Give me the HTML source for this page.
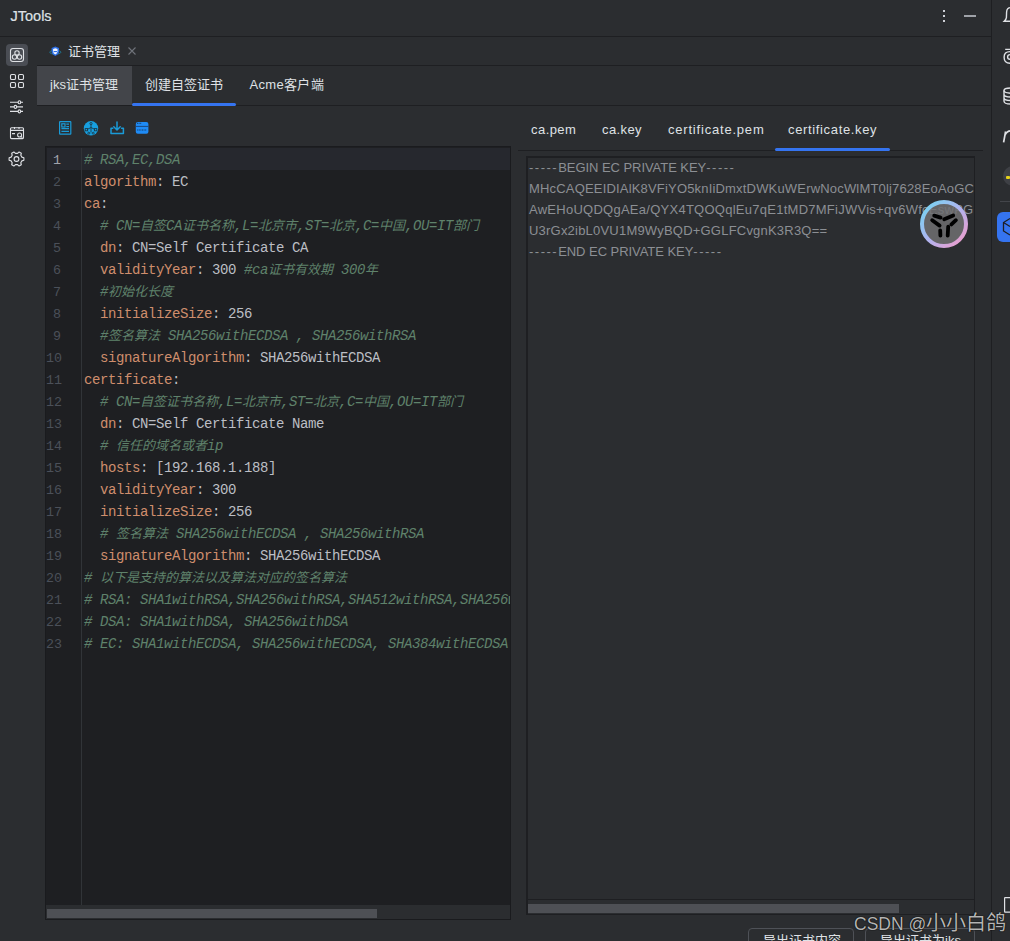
<!DOCTYPE html>
<html lang="zh-CN">
<head>
<meta charset="utf-8">
<style>
*{margin:0;padding:0;box-sizing:border-box}
html,body{width:1010px;height:941px;overflow:hidden;background:#2B2D30;font-family:"Liberation Sans",sans-serif;color:#DFE1E5}
.a{position:absolute}
.hl{position:absolute;background:#1E1F22}
.title{left:10.5px;top:7px;font-size:14.5px;font-weight:normal;-webkit-text-stroke:0.2px #DFE1E5;color:#DFE1E5;letter-spacing:0;line-height:18px}
.ttab{font-size:13px;white-space:nowrap;line-height:16px}
.z{font-size:13px}
#ed{left:45px;top:146px;width:466px;height:774px;background:#1E1F22;border:1px solid #1A1B1E;overflow:hidden}
#nums div{height:22px;line-height:22px;font-family:"Liberation Mono",monospace;font-size:13.33px;color:#4B5059;text-align:right}
#nums div.cur{color:#A1A3AB}
#code{left:38px;top:2px;white-space:pre;font-family:"Liberation Mono",monospace;font-size:14px;letter-spacing:-0.4px;color:#BCBEC4}
#code .z{letter-spacing:0}
#code .ln{height:22px;line-height:22px}
.k{color:#CF8E6D}
.cm{color:#5F826B;font-style:italic}
#ta{left:526px;top:156px;width:449px;height:759px;border:2px solid #1E1F22;border-right-width:1px;border-bottom-width:1px;background:#2B2D30;overflow:hidden}
#ta .d{letter-spacing:1.5px}
#ta .l{position:absolute;left:1px;white-space:nowrap;font-size:13px;color:#8C8F94;line-height:16px}
.btn{position:absolute;top:928px;height:26px;border:1px solid #4E5157;border-radius:4px;background:#2B2D30;font-size:13px;color:#DFE1E5;white-space:nowrap;line-height:16px;padding-top:4px}
svg{position:absolute;overflow:visible}
</style>
</head>
<body>
<!-- title bar -->
<div class="a title">JTools</div>
<div class="hl" style="left:0;top:36px;width:991px;height:1px"></div>
<div class="a" style="left:943px;top:10px;width:2px;height:2px;background:#CED0D6"></div>
<div class="a" style="left:943px;top:15px;width:2px;height:2px;background:#CED0D6"></div>
<div class="a" style="left:943px;top:20px;width:2px;height:2px;background:#CED0D6"></div>
<div class="a" style="left:964px;top:15px;width:12px;height:2px;background:#9FA2A8"></div>
<div class="hl" style="left:991px;top:0;width:1px;height:941px"></div>

<!-- left sidebar -->
<div class="a" style="left:6px;top:44px;width:22px;height:22px;background:#4A4D54;border-radius:4px"></div>
<svg width="40" height="180" style="left:0;top:0" fill="none" stroke="#DFE1E5" stroke-width="1.1">
  <rect x="10.5" y="48.5" width="13" height="13" rx="2.5"/>
  <circle cx="17" cy="52.9" r="2.2"/>
  <circle cx="14.5" cy="57" r="2.2"/>
  <circle cx="19.5" cy="57" r="2.2"/>
  <rect x="10.5" y="74.5" width="5" height="5" rx="1.3"/>
  <rect x="18.5" y="74.5" width="5" height="5" rx="1.3"/>
  <rect x="10.5" y="82.5" width="5" height="5" rx="1.3"/>
  <rect x="18.5" y="82.5" width="5" height="5" rx="1.3"/>
  <path d="M10 102.3 H18.2 M20.6 102.3 H23 M10 106.9 H14.2 M16.6 106.9 H23 M10 111.4 H18.2 M20.6 111.4 H23"/>
  <rect x="18.2" y="100.8" width="2.4" height="3" rx="1.1"/>
  <rect x="14.2" y="105.4" width="2.4" height="3" rx="1.1"/>
  <rect x="18.2" y="109.9" width="2.4" height="3" rx="1.1"/>
  <rect x="10.5" y="127.8" width="13" height="10.8" rx="1"/>
  <path d="M10.5 130.4 H23.5 M14.5 127 V129 M19 127 V129 M12 133.6 H15"/>
  <circle cx="19.6" cy="135" r="2"/>
  <path d="M21 136.4 L22.3 137.7"/>
  <path d="M21.89 157.14 L23.89 157.70 L23.89 160.30 L21.89 160.86 L20.80 162.74 L21.32 164.75 L19.07 166.05 L17.59 164.60 L15.41 164.60 L13.93 166.05 L11.68 164.75 L12.20 162.74 L11.11 160.86 L9.11 160.30 L9.11 157.70 L11.11 157.14 L12.20 155.26 L11.68 153.25 L13.93 151.95 L15.41 153.40 L17.59 153.40 L19.07 151.95 L21.32 153.25 L20.80 155.26 Z" stroke-linejoin="round"/>
  <circle cx="16.5" cy="159" r="2.4"/>
</svg>

<!-- file tab row -->
<div class="hl" style="left:37px;top:65px;width:954px;height:1px"></div>
<svg width="14" height="12" style="left:49px;top:45px">
  <ellipse cx="6.3" cy="7.2" rx="5.6" ry="2" fill="none" stroke="#1D7FA0" stroke-width="0.8"/>
  <path d="M6.3 1.6 L10 3 V6.6 Q10 9.4 6.3 10.9 Q2.6 9.4 2.6 6.6 V3 Z" fill="#2D6FE6"/>
  <path d="M6.3 3.2 L8.5 4.1 V6.5 Q8.5 8.4 6.3 9.4 Q4.1 8.4 4.1 6.5 V4.1 Z" fill="#F0F5FF"/>
  <rect x="4.6" y="6" width="3.4" height="1.1" fill="#2D6FE6"/>
</svg>
<div class="a ttab" style="left:68px;top:44px;color:#DFE1E5">证书管理</div>
<svg width="10" height="10" style="left:127px;top:46px"><path d="M1.5 1.5 L8.5 8.5 M8.5 1.5 L1.5 8.5" stroke="#6F737A" stroke-width="1.1"/></svg>

<!-- inner tabs -->
<div class="a" style="left:37px;top:66px;width:95px;height:39px;background:#43454A"></div>
<div class="hl" style="left:37px;top:105px;width:954px;height:1px"></div>
<div class="a" style="left:132px;top:103px;width:104px;height:3px;background:#3574F0;border-radius:2px"></div>
<div class="a ttab" style="left:50px;top:77px">jks证书管理</div>
<div class="a ttab" style="left:145px;top:77px">创建自签证书</div>
<div class="a ttab" style="left:249.5px;top:77px;letter-spacing:0.3px">Acme客户端</div>

<!-- toolbar icons -->
<svg width="100" height="20" style="left:56px;top:118px" fill="none">
  <g stroke="#1A9BD8" stroke-width="1.2">
    <rect x="3.6" y="3.6" width="11.2" height="12.6" rx="0.5"/>
    <rect x="5.8" y="5.8" width="3.2" height="3.2"/>
    <path d="M10.3 6.2 H13 M10.3 8.6 H13 M5.4 10.6 H13 M5.4 13.3 H13"/>
  </g>
  <circle cx="35" cy="10.3" r="7.2" fill="#17A0E0"/>
  <g stroke="#1B3A4A" stroke-width="0.9">
    <circle cx="35" cy="5.6" r="1.1"/>
    <path d="M35 6.8 V14.5 M35 9.5 L31 11.5 M35 9.5 L39 11.5"/>
    <rect x="29.2" y="10.6" width="2.4" height="2.2"/>
    <rect x="38.4" y="10.6" width="2.4" height="2.2"/>
    <circle cx="32.8" cy="15.2" r="1"/>
    <circle cx="37.2" cy="15.2" r="1"/>
  </g>
  <g stroke="#1A9BD8" stroke-width="1.5" stroke-linejoin="round" stroke-linecap="round">
    <path d="M61 4 V12 M57.8 8.8 L61 12 L64.2 8.8"/>
    <path d="M56.8 10.3 H55 V15.6 H67.4 V10.3 H65.6"/>
  </g>
  <rect x="79.8" y="3.9" width="12.6" height="11.8" rx="2" fill="#1F8BF5"/>
  <path d="M79.8 8.4 H92.4" stroke="#1A3F70" stroke-width="0.9"/>
  <path d="M81 5.3 H85.5 M81.2 12 H90.5" stroke="#123A66" stroke-width="1" stroke-dasharray="1 0.6"/>
</svg>

<!-- left editor -->
<div class="a" id="ed">
  <div class="a" style="left:1px;top:1px;width:463px;height:22px;background:#26282E"></div>
  <div class="a" style="left:35px;top:1px;width:1px;height:757px;background:#313438"></div>
  <div class="a" id="nums" style="left:0px;top:3px;width:15px"><div class="n cur">1</div><div class="n">2</div><div class="n">3</div><div class="n">4</div><div class="n">5</div><div class="n">6</div><div class="n">7</div><div class="n">8</div><div class="n">9</div><div class="n">10</div><div class="n">11</div><div class="n">12</div><div class="n">13</div><div class="n">14</div><div class="n">15</div><div class="n">16</div><div class="n">17</div><div class="n">18</div><div class="n">19</div><div class="n">20</div><div class="n">21</div><div class="n">22</div><div class="n">23</div></div>
  <div class="a" id="code"><div class="ln"><span class="cm"># RSA,EC,DSA</span></div><div class="ln"><span class="k">algorithm</span>: EC</div><div class="ln"><span class="k">ca</span>:</div><div class="ln">  <span class="cm"># CN=<span class="z">自签</span>CA<span class="z">证书名称</span>,L=<span class="z">北京市</span>,ST=<span class="z">北京</span>,C=<span class="z">中国</span>,OU=IT<span class="z">部门</span></span></div><div class="ln"><span class="k">  dn</span>: CN=Self Certificate CA</div><div class="ln"><span class="k">  validityYear</span>: 300 <span class="cm">#ca<span class="z">证书有效期</span> 300<span class="z">年</span></span></div><div class="ln">  <span class="cm">#<span class="z">初始化长度</span></span></div><div class="ln"><span class="k">  initializeSize</span>: 256</div><div class="ln">  <span class="cm">#<span class="z">签名算法</span> SHA256withECDSA , SHA256withRSA</span></div><div class="ln"><span class="k">  signatureAlgorithm</span>: SHA256withECDSA</div><div class="ln"><span class="k">certificate</span>:</div><div class="ln">  <span class="cm"># CN=<span class="z">自签证书名称</span>,L=<span class="z">北京市</span>,ST=<span class="z">北京</span>,C=<span class="z">中国</span>,OU=IT<span class="z">部门</span></span></div><div class="ln"><span class="k">  dn</span>: CN=Self Certificate Name</div><div class="ln">  <span class="cm"># <span class="z">信任的域名或者</span>ip</span></div><div class="ln"><span class="k">  hosts</span>: [192.168.1.188]</div><div class="ln"><span class="k">  validityYear</span>: 300</div><div class="ln"><span class="k">  initializeSize</span>: 256</div><div class="ln">  <span class="cm"># <span class="z">签名算法</span> SHA256withECDSA , SHA256withRSA</span></div><div class="ln"><span class="k">  signatureAlgorithm</span>: SHA256withECDSA</div><div class="ln"><span class="cm"># <span class="z">以下是支持的算法以及算法对应的签名算法</span></span></div><div class="ln"><span class="cm"># RSA: SHA1withRSA,SHA256withRSA,SHA512withRSA,SHA256withDSA</span></div><div class="ln"><span class="cm"># DSA: SHA1withDSA, SHA256withDSA</span></div><div class="ln"><span class="cm"># EC: SHA1withECDSA, SHA256withECDSA, SHA384withECDSA</span></div></div>
  <div class="a" style="left:0;top:758px;width:464px;height:14px;background:#2B2D30"></div>
  <div class="a" style="left:1px;top:762px;width:330px;height:9px;background:#4E5055"></div>
</div>

<!-- right tabs -->
<div class="a ttab" style="left:531px;top:122px;letter-spacing:0.45px">ca.pem</div>
<div class="a ttab" style="left:602px;top:122px;letter-spacing:0.4px">ca.key</div>
<div class="a ttab" style="left:668px;top:122px;letter-spacing:0.8px">certificate.pem</div>
<div class="a ttab" style="left:788px;top:122px;letter-spacing:0.65px">certificate.key</div>
<div class="hl" style="left:518px;top:150px;width:465px;height:1px"></div>
<div class="a" style="left:775px;top:148px;width:115px;height:3px;background:#3574F0;border-radius:2px"></div>

<!-- right text area -->
<div class="a" id="ta">
  <div class="l" style="top:2px;letter-spacing:-0.05px"><span class="d">-----</span>BEGIN EC PRIVATE KEY<span class="d">-----</span></div>
  <div class="l" style="top:23px;letter-spacing:0.18px">MHcCAQEEIDIAlK8VFiYO5knIiDmxtDWKuWErwNocWlMT0lj7628EoAoGC</div>
  <div class="l" style="top:44px;letter-spacing:0.26px">AwEHoUQDQgAEa/QYX4TQOQqlEu7qE1tMD7MFiJWVis+qv6WfcEswPG</div>
  <div class="l" style="top:65px;letter-spacing:0.21px">U3rGx2ibL0VU1M9WyBQD+GGLFCvgnK3R3Q==</div>
  <div class="l" style="top:86px;letter-spacing:-0.05px"><span class="d">-----</span>END EC PRIVATE KEY<span class="d">-----</span></div>
  <div class="a" style="left:0;top:741px;width:446px;height:15px;background:#2B2D30;border-top:1px solid #1E1F22"></div>
  <div class="a" style="left:0;top:746px;width:371px;height:9px;background:#4E5055"></div>
</div>

<!-- floating logo -->
<svg width="50" height="50" style="left:919px;top:199px">
  <defs>
    <linearGradient id="rg" x1="0" y1="0" x2="1" y2="1">
      <stop offset="0" stop-color="#6FD6F0"/>
      <stop offset="0.5" stop-color="#B0B4F0"/>
      <stop offset="1" stop-color="#F59AC8"/>
    </linearGradient>
  </defs>
  <circle cx="25" cy="25" r="22" fill="#707072" fill-opacity="0.84"/>
  <circle cx="25" cy="25" r="22" fill="none" stroke="url(#rg)" stroke-width="4"/>
  <g stroke="#000" stroke-width="3.8" stroke-linecap="round">
    <path d="M15.2 16.6 L21.6 18.6"/>
    <path d="M25.2 20.2 L34.2 16.4"/>
    <path d="M13.2 21.2 L20.6 26.6"/>
    <path d="M36.9 21.2 L32.4 25.4"/>
    <path d="M21.2 31.4 L21.4 36.6"/>
    <path d="M29.2 27.6 L28.7 36.6"/>
  </g>
</svg>

<!-- right sidebar partial icons -->
<svg width="20" height="941" style="left:991px;top:0" fill="none" stroke="#DFE1E5" stroke-width="1.2">
  <path d="M19.5 7.6 Q15.9 7.6 15.6 12 L15.4 17.6 Q15.2 19.4 13.2 21.3 H19.5" stroke-width="1.4"/>
  <path d="M14.2 49.4 H19 M19 51.6 Q13.1 51.6 13.1 57.3 Q13.1 63.2 19 63.2 M19 54.6 Q16.6 54.6 16.6 56.9 Q16.6 59.2 19 59.2" stroke-width="1.4"/>
  <ellipse cx="19.5" cy="90.6" rx="6.5" ry="2.6" stroke-width="1.4"/>
  <path d="M13 90.6 V101.2 Q13.3 104 19.5 104 M13 94.3 Q13.3 97 19.5 97 M13 97.8 Q13.3 100.5 19.5 100.5" stroke-width="1.4"/>
  <path d="M14.6 131.5 L12.6 142.3 M14.1 135 Q16 130.5 20 130.8" stroke-width="1.7"/>
  <path d="M9 201.5 H19" stroke="#43454A" stroke-width="1"/>
  <path d="M14 897.7 H19 M14 897.7 Q13.6 897.7 13.6 898.5 V911.5 Q13.6 912.2 14 912.2 H19"/>
</svg>
<div class="a" style="left:1003px;top:166px;width:20px;height:20px;border-radius:10px;background:#3E4045"></div>
<div class="a" style="left:1006px;top:176px;width:4px;height:3px;background:#E6D21A;border-radius:1px"></div>
<div class="a" style="left:997px;top:212px;width:30px;height:30px;border-radius:6px;background:#3574F0"></div>
<svg width="20" height="30" style="left:1000px;top:212px" fill="none" stroke="#1E1F22" stroke-width="1.3">
  <path d="M10 6.5 L3.5 10.5 V19 L10 23 M3.5 10.5 L10 14.5"/>
</svg>

<!-- bottom buttons -->
<div class="btn" style="left:748px;width:106px;padding-left:14px">导出证书内容</div>
<div class="btn" style="left:865px;width:110px;padding-left:14px">导出证书为jks</div>

<!-- watermark -->
<div class="a" style="left:854px;top:911px;white-space:nowrap;color:#B4B4B4;text-shadow:0 0 1px #000,0 0 1px #000;line-height:24px"><span style="font-size:17.5px">CSDN @</span><span style="font-size:20px">小小白鸽</span></div>
</body>
</html>
